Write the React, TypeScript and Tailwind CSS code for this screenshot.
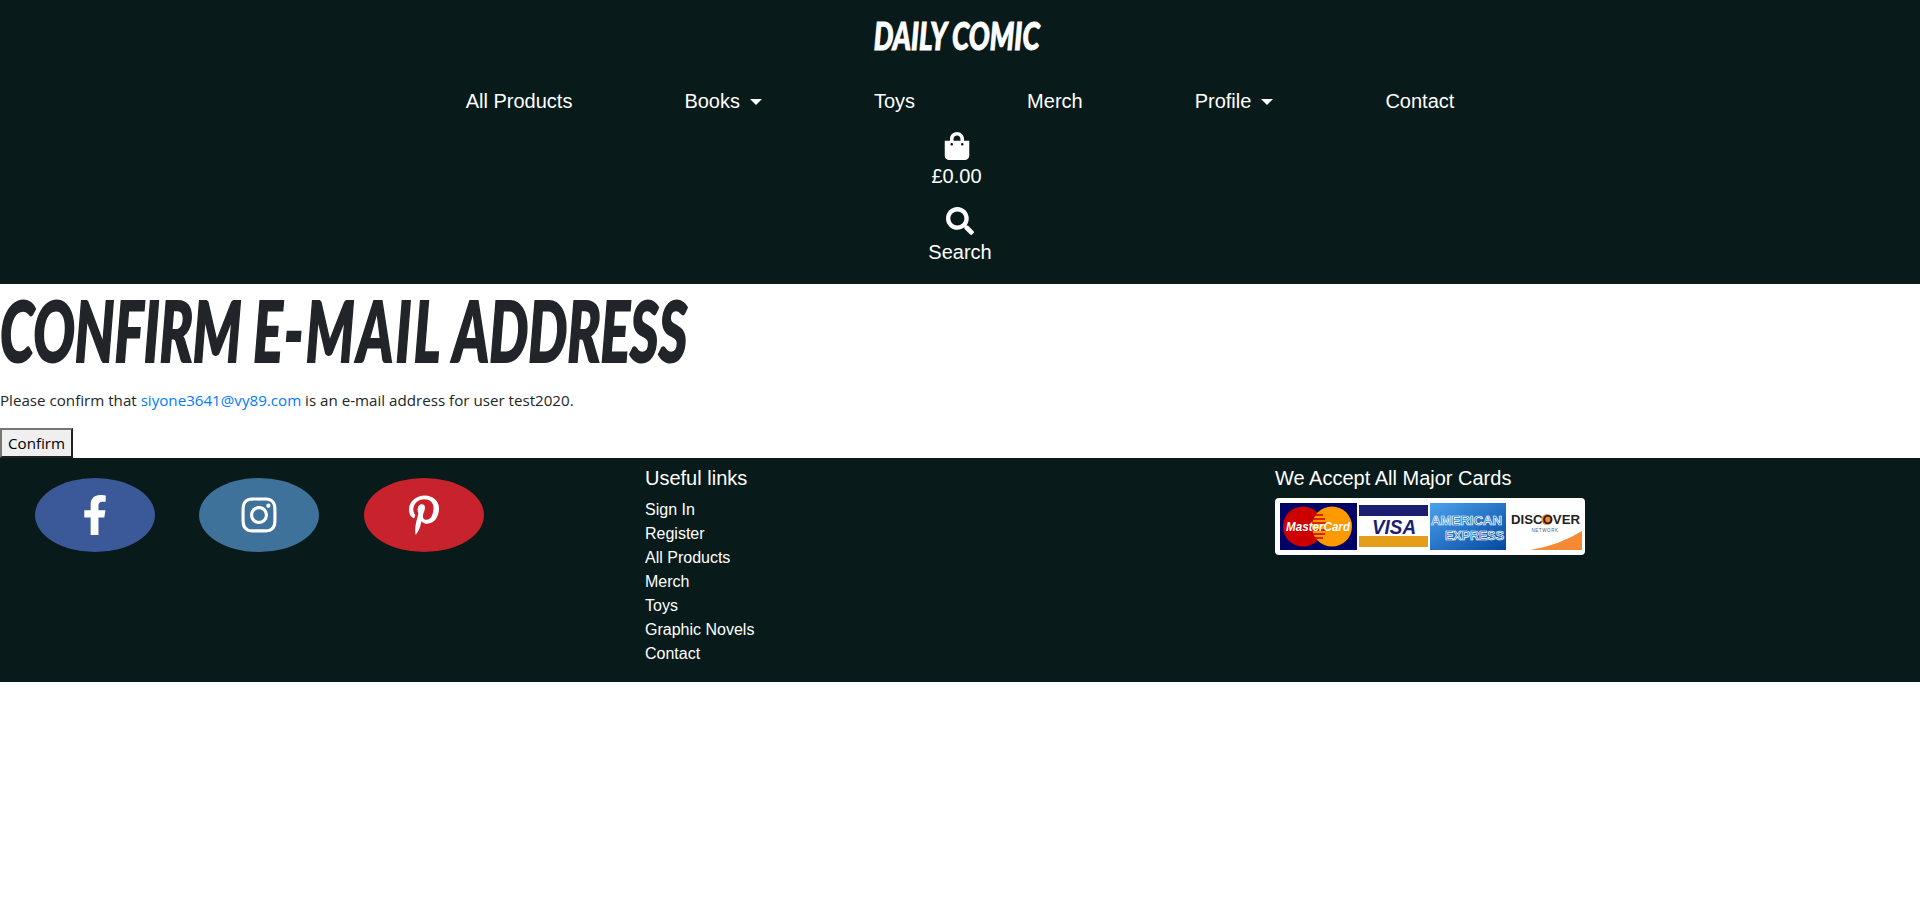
import { FaFacebookF, FaInstagram, FaPinterestP, FaSearch, FaShoppingBag } from "react-icons/fa";

const arial = "font-['Liberation_Sans',Arial,sans-serif]";
// no Bangers available, so a black italic squeezed sideways
const comic = "font-['Lato','Liberation_Sans',sans-serif] font-black italic uppercase";
const bodyFont = "font-['Open_Sans','Noto_Sans',sans-serif]";

const navItems = [
  { label: "All Products" },
  { label: "Books", caret: true },
  { label: "Toys" },
  { label: "Merch" },
  { label: "Profile", caret: true },
  { label: "Contact" },
];

const footerLinks = ["Sign In", "Register", "All Products", "Merch", "Toys", "Graphic Novels", "Contact"];

function Caret() {
  return <span className="ml-[10px] inline-block border-x-[6px] border-t-[6px] border-x-transparent border-t-white align-[3px]" />;
}

function CardStrip() {
  return (
    <div className="flex h-[57px] w-[310px] items-center gap-[2px] rounded-[4px] bg-white pl-[5px]">
      {/* MasterCard */}
      <svg width="77" height="47" viewBox="0 0 77 47">
        <rect width="77" height="47" fill="#000066" />
        <circle cx="23" cy="23.5" r="20" fill="#cc0000" />
        <circle cx="52" cy="23.5" r="20" fill="#ff9900" />
        <path d="M33 12h10M31 16h14M30 20h16M30 27h16M31 31h14M33 35h10" stroke="#cc0000" strokeWidth="1.5" />
        <text x="38" y="28" textAnchor="middle" fontFamily="Liberation Sans, sans-serif" fontWeight="700" fontStyle="italic" fontSize="12" textLength="64" lengthAdjust="spacingAndGlyphs" fill="#fff">MasterCard</text>
      </svg>
      {/* Visa */}
      <svg width="69" height="47" viewBox="0 0 69 47">
        <rect width="69" height="47" fill="#fff" />
        <rect y="2" width="69" height="11" fill="#1a1f71" />
        <rect y="33" width="69" height="11" fill="#e59e1a" />
        <text x="35" y="31" textAnchor="middle" fontFamily="Liberation Sans, sans-serif" fontWeight="700" fontStyle="italic" fontSize="20" textLength="44" lengthAdjust="spacingAndGlyphs" fill="#1a1f71">VISA</text>
      </svg>
      {/* American Express */}
      <svg width="76" height="47" viewBox="0 0 76 47">
        <defs>
          <linearGradient id="amex" x1="0" y1="0" x2="1" y2="1">
            <stop offset="0" stopColor="#4aa3ee" />
            <stop offset="1" stopColor="#0647a0" />
          </linearGradient>
        </defs>
        <rect width="76" height="47" fill="url(#amex)" />
        <text x="1" y="22" fontFamily="Liberation Sans, sans-serif" fontWeight="700" fontSize="12.5" textLength="71" lengthAdjust="spacingAndGlyphs" fill="#1e6fc6" stroke="#fff" strokeWidth="0.7">AMERICAN</text>
        <text x="15" y="37" fontFamily="Liberation Sans, sans-serif" fontWeight="700" fontSize="12.5" textLength="59" lengthAdjust="spacingAndGlyphs" fill="#1e6fc6" stroke="#fff" strokeWidth="0.7">EXPRESS</text>
      </svg>
      {/* Discover */}
      <svg width="72" height="47" viewBox="0 0 72 47" className="ml-[2px]">
        <rect width="72" height="47" fill="#fff" />
        <path d="M20 47 Q50 42 72 28 V47 Z" fill="#f58a33" />
        <circle cx="37" cy="16.5" r="5.5" fill="#f58a33" />
        <text x="1" y="21" fontFamily="Liberation Sans, sans-serif" fontWeight="700" fontSize="13" textLength="69" lengthAdjust="spacingAndGlyphs" fill="#222">DISCOVER</text>
        <text x="35" y="29" textAnchor="middle" fontFamily="Liberation Sans, sans-serif" fontSize="4.5" letterSpacing="0.6" fill="#555">NETWORK</text>
      </svg>
    </div>
  );
}

export default function App() {
  return (
    <div className={`min-h-[912px] bg-white ${arial}`}>
      {/* Header */}
      <header className="flex h-[284px] flex-col items-center bg-[#081a1a] text-white">
        <a className={`mt-[13px] inline-block origin-center -translate-x-[3px] scale-x-[0.75] text-[37px] leading-[45px] [-webkit-text-stroke:1px_white] ${comic}`}>Daily Comic</a>
        <nav className="mt-[31px] flex gap-[112px] text-[20px] leading-[24px]">
          {navItems.map((item) => (
            <a key={item.label} className="whitespace-nowrap">
              {item.label}
              {item.caret && <Caret />}
            </a>
          ))}
        </nav>
        <div className="mr-[7px] mt-[19px] flex flex-col items-center text-[20px] leading-[24px]">
          <FaShoppingBag className="size-[28px]" />
          <span className="mt-[4px]">£0.00</span>
        </div>
        <div className="mt-[19px] flex flex-col items-center text-[20px] leading-[24px]">
          <FaSearch className="size-[28px]" />
          <span className="mt-[5px]">Search</span>
        </div>
      </header>

      {/* Main */}
      <main className="h-[174px] text-[#212529]">
        <h1 className={`origin-left scale-x-[0.655] whitespace-nowrap text-[84px] leading-[92px] [-webkit-text-stroke:2px_#212529] ${comic}`}>
          Confirm <span className="tracking-[3.7px]">E-mail</span> Address
        </h1>
        <p className={`mt-[12px] text-[15.15px] leading-[24px] ${bodyFont}`}>
          Please confirm that <a className="text-[#007bff]">siyone3641@vy89.com</a> is an e-mail address for user test2020.
        </p>
        <button className={`mt-[16px] h-[30px] border-2 border-[#767676] bg-[#efefef] px-[6px] text-[15.15px] text-black [border-style:outset] ${bodyFont}`}>
          Confirm
        </button>
      </main>

      {/* Footer */}
      <footer className="flex h-[224px] bg-[#081a1a] pl-[15px] text-white">
        <div className="flex w-[630px] gap-[44px] pl-[20px] pt-[20px]">
          <a className="flex h-[74px] w-[120px] items-center justify-center rounded-[50%] bg-[#3b5998]"><FaFacebookF className="size-[40px]" /></a>
          <a className="flex h-[74px] w-[120px] items-center justify-center rounded-[50%] bg-[#3f729b]"><FaInstagram className="size-[40px]" /></a>
          <a className="ml-[1px] flex h-[74px] w-[120px] items-center justify-center rounded-[50%] bg-[#c8232c]"><FaPinterestP className="size-[40px]" /></a>
        </div>
        <div className="w-[630px] pt-[8px]">
          <h5 className="text-[20px] leading-[24px]">Useful links</h5>
          <ul className="mt-[8px] text-[16px] leading-[24px]">
            {footerLinks.map((link) => (
              <li key={link}>{link}</li>
            ))}
          </ul>
        </div>
        <div className="w-[630px] pt-[8px]">
          <h5 className="mb-[8px] text-[20px] leading-[24px]">We Accept All Major Cards</h5>
          <CardStrip />
        </div>
      </footer>
    </div>
  );
}
